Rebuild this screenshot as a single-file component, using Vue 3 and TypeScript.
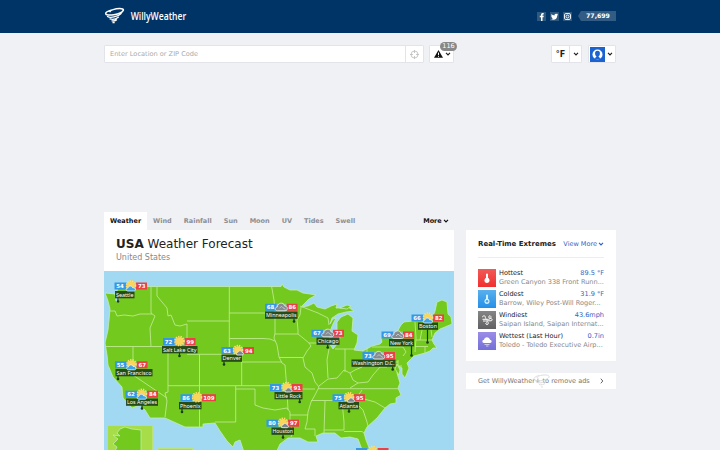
<template>
  <div class="page">
    <header class="header">
      <div class="container header-inner">
        <svg class="logo" width="100" height="24" viewBox="104 4 100 24">
          <g fill="none" stroke="#fff" stroke-linecap="round">
            <path stroke-width="1.5" d="M111 10.3c-3 .8-5.500 2.200-5.300 3.600.3 2.300 15.500 1.300 17.700-3.800.6-2.100-6.600-1.700-10.300-.5-2.200.7-3.300 1.400-3 2" />
            <path stroke-width="1.300" d="M107.500 16.500c2.500 1.700 10.500.5 13.600-3M110 18.900c2.600.8 6.300-.1 8.300-1.700M112 20.900c1.500.3 3.300-.2 4.500-1M113 22.700h1.200" />
          </g>
          <text x="130.700" y="19.600" textLength="55.500" lengthAdjust="spacingAndGlyphs">WillyWeather</text>
        </svg>
        <div class="social">
          <span class="social-link">
            <svg viewBox="0 0 9 9"><path d="M4 9V5.300H2.800V3.700H4V2.800C4 1.300 4.900.8 6.700 1v1.500c-1-.1-1.200.1-1.200.7v.5h1.300l-.3 1.600h-1V9z" /></svg>
          </span>
          <span class="social-link">
            <svg viewBox="0 0 9 9"><path d="M1.500 1.900c.9 1 1.900 1.400 3 1.500C4.300 2 5.900 1.100 6.900 2.100L8 1.800l-.7 1 .7-.1-.7.8c0 4-3.600 5-6.300 3.500.9 0 1.500-.2 2-.6-.7-.1-1.200-.5-1.400-1h.6c-.7-.4-1-.9-1-1.600l.6.2c-.6-.6-.7-1.300-.3-2.100z" /></svg>
          </span>
          <span class="social-link">
            <svg class="line" viewBox="0 0 9 9"><rect x="1.500" y="1.500" width="6" height="6" rx="1.400" /><circle cx="4.500" cy="4.500" r="1.500" /><path d="M6.200 2.600h.2" /></svg>
          </span>
          <span class="count">77,699</span>
        </div>
      </div>
    </header>

    <div class="container toolbar">
      <div class="search">
        <span class="search-text">Enter Location or ZIP Code</span>
        <span class="locate">
          <svg width="9" height="9" viewBox="0 0 9 9"><circle cx="4.500" cy="4.500" r="3.500" /><path d="M4.500 0v3M4.500 6v3M0 4.500h3M6 4.500h3" /></svg>
        </span>
      </div>
      <div class="box alerts">
        <svg width="9" height="8" viewBox="0 0 9 8"><path d="M4.500 0 9 7.700H0z" fill="#111" /><path d="M4.500 2.600v2.500M4.500 5.800v1" stroke="#fff" /></svg>
        <svg class="chevron" viewBox="0 0 6 4"><path d="m1 .8 2 2 2-2" /></svg>
        <span class="badge">116</span>
      </div>
      <div class="box unit">
        <b>°F</b>
        <span class="unit-arrow"><svg class="chevron" viewBox="0 0 6 4"><path d="m1 .8 2 2 2-2" /></svg></span>
      </div>
      <div class="box account">
        <svg width="15" height="15" viewBox="0 0 15 15">
          <rect width="15" height="15" fill="#1c63d2" />
          <circle cx="7.500" cy="7.500" r="5" fill="#fff" />
          <path d="M7.500 3.800c-1.800 0-2.600 1.300-2.400 3 .1 1.400.7 2.200 1.400 2.800-.2.900-1.200 1-2 1.600 1.800 1.700 4.200 1.700 6 0-.8-.6-1.800-.7-2-1.600.7-.6 1.300-1.400 1.400-2.800.2-1.700-.6-3-2.400-3z" fill="#1c63d2" />
        </svg>
        <svg class="chevron" viewBox="0 0 6 4"><path d="m1 .8 2 2 2-2" /></svg>
      </div>
    </div>

    <div class="container content">
      <main class="main">
        <nav class="tabs">
          <span v-for="(tab, i) in tabs" :key="tab" class="tab" :class="{ active: i === 0 }">{{ tab }}</span>
          <span class="more">More <svg class="chevron" viewBox="0 0 6 4"><path d="m1 .8 2 2 2-2" /></svg></span>
        </nav>
        <div class="title">
          <h1><b>USA</b> Weather Forecast</h1>
          <p>United States</p>
        </div>

        <svg class="map" width="350" height="179" viewBox="104 271 350 179">
          <rect x="104" y="271" width="350" height="179" fill="#a1d9f3" />
          <path class="land" :d="land" />
          <path class="land" :d="michigan" />
          <path class="borders" :d="borders" />
          <rect x="107.500" y="425.500" width="45" height="30" fill="#a6dd48" stroke="#b9e27a" />
          <path class="land" d="M141 451V430l-9-1-7-2-5 2-3 4 3 3-7-1 5 4-5 5 4 3-2 4z" />
          <rect x="158.500" y="448.500" width="34" height="6" fill="#a6dd48" stroke="#b9e27a" />

          <g v-for="c in cities" :key="c.name">
            <rect class="low" :x="c.x - 16.500" :y="c.y - 3.500" width="12" height="7" />
            <rect class="high" :x="c.x + 5" :y="c.y - 3.500" :width="c.high > 99 ? 14 : 11" height="7" />
            <rect :x="c.x - 5" :y="c.y - 3.500" width="10" height="7" fill="#91cfe7" opacity=".6" />
            <text class="temp" :x="c.x - 11" :y="c.y + 2">{{ c.low }}</text>
            <text class="temp" :x="c.x + (c.high > 99 ? 12 : 10.700)" :y="c.y + 2">{{ c.high }}</text>
            <template v-if="c.labelY < 450">
              <path class="pin" :d="`M${c.pinX} ${c.labelY + 7}V${c.pinY}`" />
              <circle :cx="c.pinX" :cy="c.pinY" r="1.300" fill="#173c16" />
              <rect class="label" :x="c.left" :y="c.labelY" :width="c.width" height="7.300" />
              <text class="city" :x="c.left + c.width / 2" :y="c.labelY + 5.600" :textLength="c.width - 2" lengthAdjust="spacingAndGlyphs">{{ c.name }}</text>
            </template>
            <g :transform="`translate(${c.x} ${c.y})`">
              <template v-if="c.icon !== 'cloud'">
                <circle r="4.300" fill="none" stroke="#ffe06a" stroke-width="2" stroke-dasharray="1.300 1" cy="-.5" />
                <circle r="3.700" cy="-.5" fill="#fcd55b" />
              </template>
              <path v-if="c.icon === 'partly'" d="M-3 5c-2.500 0-2.500-3 0-3 .4-2.500 4-2.500 4.600-.3C4.500 1 5.500 5 3 5z" fill="#3da5e8" stroke="#e9f5fb" stroke-width=".8" />
              <path v-if="c.icon === 'storm'" d="M0 4.500c-2 0-2-2.700 0-2.700.5-2 3.500-2 4 0 2 0 2 2.700 0 2.700z" fill="#7c858c" stroke="#eef3f5" stroke-width=".8" />
              <path v-if="c.icon === 'cloud'" d="M-4 3.500c-3 0-3-3.600-.3-3.700C-4-4.500 2-5.800 3-1.500 6.600-1.300 6.700 3.500 3.500 3.500z" fill="#858b90" stroke="#e3e8eb" stroke-width=".9" />
              <path v-if="c.icon === 'cloud'" d="m-2 1 2-2 1.500 1.500L4 2" fill="none" stroke="#d8dcdf" stroke-width=".7" />
            </g>
          </g>
        </svg>
      </main>

      <aside class="sidebar">
        <section class="extremes">
          <div class="extremes-head">
            <h2>Real-Time Extremes</h2>
            <span class="view">View More <svg class="chevron" viewBox="0 0 6 4"><path d="m1 .8 2 2 2-2" /></svg></span>
          </div>
          <div v-for="e in extremes" :key="e.name" class="extreme">
            <svg class="tile" :class="e.kind" viewBox="0 0 18 18">
              <path v-if="e.kind === 'hot'" d="M8 5.500a1 1 0 0 1 2 0v3.300c2.800 2 1.500 5.200-1 5.200s-3.800-3.200-1-5.200z" fill="#fff" />
              <g v-if="e.kind === 'cold'">
                <path d="M8 5.500a1 1 0 0 1 2 0v3.300c2.800 2 1.500 5.200-1 5.200s-3.800-3.200-1-5.200z" fill="#d9f2ff" />
                <circle cx="9" cy="11.200" r="1.300" fill="#41a5ed" />
              </g>
              <path v-if="e.kind === 'wind'" d="M4.500 8.300h6c1.200-.1 3-1.300 2.400-2.800-.6-1.300-2.300-.7-2.200.6.100 1.300 2 1.200 2.900 1.700 1 .7.500 2-.5 2H8.500M4.500 6.200c0-1.700 2.600-1.900 2.800-.4.100.7 0 1.700 1.200 2.500M5 10h2.500c1.500 0 2.900.8 2.800 2.500-.1 1.300-2.300 1.400-2.500.2-.1-1 .8-1.200 1.500-.7" fill="none" stroke="#fff" stroke-width="1" />
              <g v-if="e.kind === 'wet'">
                <path d="M6 11c-2.200 0-2-3.200 0-3.200.4-3.500 5.500-3.500 6 0 2 0 2.300 3.200 0 3.200z" fill="#fff" />
                <path d="M6.500 12.500h5M8 14h2.500" stroke="#fff" opacity=".6" />
              </g>
            </svg>
            <div class="extreme-text">
              <div class="extreme-top"><span>{{ e.name }}</span><span class="value">{{ e.value }}</span></div>
              <div class="place">{{ e.place }}</div>
            </div>
          </div>
        </section>
        <div class="remove-ads">
          <svg class="ghost" width="18" height="15" viewBox="0 0 18 15"><path d="M6 1.500C-3 4 1 8 9 6.500S19 .5 11 1 3 4.500 6 5M3 8c4 2 9 0 12-2M6 10.500c2 .8 5 0 6-1M8 13h2" /></svg>
          <span>Get WillyWeather+ to remove ads</span>
          <svg width="4" height="6" viewBox="0 0 4 6"><path d="m.8.700 2 2.300-2 2.300" fill="none" stroke="#666" stroke-width="1" /></svg>
        </div>
      </aside>
    </div>
  </div>
</template>

<script setup lang="ts">
interface City {
  name: string
  low: number
  high: number
  icon: 'sun' | 'partly' | 'storm' | 'cloud'
  x: number
  y: number
  left: number
  width: number
  labelY: number
  pinX: number
  pinY: number
}

const tabs = ['Weather', 'Wind', 'Rainfall', 'Sun', 'Moon', 'UV', 'Tides', 'Swell']

const extremes = [
  { kind: 'hot', name: 'Hottest', value: '89.5 °F', place: 'Green Canyon 338 Front Runn...' },
  { kind: 'cold', name: 'Coldest', value: '31.9 °F', place: 'Barrow, Wiley Post-Will Roger...' },
  { kind: 'wind', name: 'Windiest', value: '43.6mph', place: 'Saipan Island, Saipan Internat...' },
  { kind: 'wet', name: 'Wettest (Last Hour)', value: '0.7in', place: 'Toledo - Toledo Executive Airp...' },
]

const cities: City[] = [
  { name: 'Seattle', low: 54, high: 73, icon: 'partly', x: 131, y: 286, left: 115, width: 19.5, labelY: 291, pinX: 118, pinY: 301.5 },
  { name: 'Salt Lake City', low: 72, high: 99, icon: 'sun', x: 179.5, y: 341.5, left: 162, width: 35.5, labelY: 346, pinX: 179.5, pinY: 356 },
  { name: 'San Francisco', low: 55, high: 67, icon: 'partly', x: 131.5, y: 364.8, left: 115.5, width: 37, labelY: 369, pinX: 118, pinY: 379 },
  { name: 'Los Angeles', low: 62, high: 84, icon: 'partly', x: 142, y: 394.2, left: 126, width: 32, labelY: 398.5, pinX: 142, pinY: 408.5 },
  { name: 'Phoenix', low: 86, high: 109, icon: 'sun', x: 197, y: 397.7, left: 179, width: 22.5, labelY: 402, pinX: 182, pinY: 412 },
  { name: 'Denver', low: 63, high: 94, icon: 'storm', x: 238, y: 350.5, left: 221.5, width: 20.5, labelY: 354.5, pinX: 224, pinY: 364.5 },
  { name: 'Minneapolis', low: 68, high: 86, icon: 'cloud', x: 281.5, y: 307.3, left: 265, width: 32.5, labelY: 311.5, pinX: 294, pinY: 321.5 },
  { name: 'Chicago', low: 67, high: 73, icon: 'cloud', x: 328, y: 333.3, left: 316.5, width: 23, labelY: 337.5, pinX: 327.7, pinY: 347.5 },
  { name: 'Boston', low: 66, high: 82, icon: 'partly', x: 428, y: 318, left: 418, width: 20, labelY: 322.5, pinX: 427.5, pinY: 342.5 },
  { name: 'New York', low: 69, high: 84, icon: 'cloud', x: 398, y: 335, left: 389, width: 25, labelY: 339, pinX: 411.5, pinY: 355.5 },
  { name: 'Washington D.C.', low: 73, high: 95, icon: 'cloud', x: 379, y: 355.5, left: 351.5, width: 44, labelY: 359.5, pinX: 392.7, pinY: 369.5 },
  { name: 'Atlanta', low: 75, high: 95, icon: 'storm', x: 349, y: 397.7, left: 338.5, width: 20.5, labelY: 402, pinX: 349, pinY: 411.5 },
  { name: 'Little Rock', low: 73, high: 91, icon: 'storm', x: 286.5, y: 387.5, left: 274.5, width: 28, labelY: 392, pinX: 299.7, pinY: 402 },
  { name: 'Houston', low: 80, high: 97, icon: 'storm', x: 283, y: 423.2, left: 271.5, width: 22.5, labelY: 427.5, pinX: 283, pinY: 437.5 },
  { name: 'Tampa', low: 80, high: 91, icon: 'storm', x: 372.5, y: 451.5, left: 362, width: 21, labelY: 456, pinX: 372, pinY: 466 },
]

// Contiguous states, clockwise from Puget Sound
const land = `M105 293L115 294 116 301 118 303 119 296 117 290 120 286.500H281L282 284 284 287 290 290 297 290 303 293
  310 294 316 295 309 299 301 307 308 306 314 303 317 307 325 309 331 306 337 304 336 308 342 308 348 307 354 311
  346 312 338 314 332 318 330 324 333 319 336 318 333 324 330 331 329 343 333 349 337 344 340 338 337 330 337 322
  341 317 348 314 353 318 352 331 358 335 357 343 354 350 363 351 372 346 380 344 382 342 381 338 390 336 397 332
  401 325 404 322 413 321 431 321 435 311 437 302 442 300 447 302 448 314 451 317 452 324 445 327 440 329 435 333
  432 340 434 344 437 348 433 348 430 351 425 353 414 356 407 363 409 368 405 378 402 374 402 368 399 366 397 373
  400 383 398 388 401 395 396 398 396 403 390 404 385 408 377 418 367 427 364 433 366 440 370 450 374 460H366L361
  447 358 439 350 437 341 438 335 433 323 433 316 436 318 442 308 442 300 438 288 438 280 444 275 455H245L240 440
  235 442 233 447 227 441 220 431 215 423 203 424 203 427H185L165 418H150L145 410 140 405 132 408 123 398 122 387
  113 377 108 365 107 355 105 343 108 330 109 320 110 309 108 301z`

const michigan = 'M397 364l3 6-1 5-4-6zM340 308l7-3 4 1-4 3z'

// State lines, roughly west to east
const borders = `M110 311H115L117 316 124 315 133 316 140 314H152M151 287V313L155 316 150 328 151 346.500M106
  346.500H168M133 347V375L167 398M157 287V296L167 308 168 316 171 315 175 325 180 326 187 324V346.500H168V392L165
  393 167 401 165 417M187 321H229.300M187 354.300H229.300M229.300 287V354.300H241.700V385.700M229.300 313H275M229.300
  338.500H263L270 339 275 341M168 385.700H286.700M199.500 354.300V427M235.700 386V422H215M235.700 389H255V405L263
  408 275 410 287 408 290 412V423L293 432 291 437M241.700 362H282M271.700 287L274 300 275 311V333L274 338 277 345
  279 357 282 363 285 365 286.700 386 288 410M275 334H298L303 338 309 343 311 346 307 351 303 358 305 367 312 373
  315 382 319 387 315 395 311 402 308 412 307 422 305 429H315V436M301 307L300 315 297 320 298 330V334M279
  357.500H303M309 343H329M300 306L318 313 328 318 329 325M329 349L327 360 328 378M335 349H355M345 349V372M287
  389H315M318 388.700H398M311 400.500H354L364 399 375 402 385 408M290 415H308M319 386L328 379 337 378 344 370 350
  373 355 370 362 367 365 360 367 352M325 401L324 433M342 401L344 422V430H324M344 431.500H362L364 433M355 402L363
  410 367 422 368 426M350 373L353 380 358 383 368 382 373 375 380 367 387 367M358 383L350 388M355 400L362 390M367
  347V362H398M372 347H403L406 352 403 356M398 360V366H402M415 322L416 338 415 352M422 321V330L420 340M430 322L432
  337M416 340H432M415 346.500H428M425 347V353`
</script>

<style>
body {
  background: #eff1f5;
  overflow: hidden;
}
</style>

<style scoped>
.page {
  height: 450px;
  overflow: hidden;
  background: #eff1f5;
  font-family: "DejaVu Sans", sans-serif;
  font-size: 6.55px;
  color: #222;
}

.container {
  width: 512px;
  margin: 0 auto;
}

.header {
  height: 33px;
  background: #003467;
}

.header-inner {
  display: flex;
  align-items: center;
  justify-content: space-between;
  height: 32px;
}

.logo {
  overflow: visible;
}

.logo text {
  font-family: "Open Sans", sans-serif;
  font-size: 10.2px;
  font-weight: 600;
  fill: #fff;
}

.social {
  display: flex;
  align-items: center;
  gap: 4px;
}

.social-link {
  width: 9px;
  height: 9px;
  background: #2f587f;
}

.social-link svg {
  display: block;
  fill: #fff;
}

.social-link svg.line {
  fill: none;
  stroke: #fff;
  stroke-width: .9;
}

.count {
  width: 38px;
  height: 10px;
  padding-left: 2px;
  margin-left: 2px;
  box-sizing: border-box;
  background: #335c84;
  clip-path: polygon(0 50%, 3px 0, 100% 0, 100% 100%, 3px 100%);
  color: #fff;
  font-weight: bold;
  font-size: 6.2px;
  line-height: 10px;
  text-align: center;
}

.toolbar {
  display: flex;
  height: 18px;
  padding-top: 12px;
}

.search,
.box {
  display: flex;
  align-items: center;
  box-sizing: border-box;
  height: 18px;
  background: #fff;
  border: 1px solid #e3e4e9;
  border-radius: 1px;
}

.search {
  width: 320px;
  padding-left: 5px;
  justify-content: space-between;
  color: #aaa;
  font-size: 6.6px;
}

.locate {
  display: flex;
  align-items: center;
  justify-content: center;
  width: 17px;
  height: 16px;
  border-left: 1px solid #e4e4e8;
}

.locate svg {
  fill: none;
  stroke: #bbb;
  stroke-width: .8;
}

.chevron {
  width: 6px;
  height: 4px;
  fill: none;
  stroke: currentColor;
  stroke-width: 1.2;
}

.alerts {
  position: relative;
  width: 25px;
  margin-left: 5px;
  padding-left: 4px;
  gap: 2px;
}

.badge {
  position: absolute;
  top: -4px;
  right: -4px;
  width: 17px;
  height: 9px;
  border-radius: 5px;
  background: #888;
  color: #fff;
  font-size: 6.5px;
  line-height: 9px;
  text-align: center;
}

.unit {
  width: 31px;
  margin-left: auto;
  font-size: 8px;
}

.unit b {
  flex: 1;
  text-align: center;
}

.unit-arrow {
  display: flex;
  align-items: center;
  justify-content: center;
  width: 11px;
  height: 16px;
  border-left: 1px solid #e1e2e7;
}

.account {
  width: 28px;
  margin-left: 6px;
  padding-left: 1px;
  gap: 2px;
}

.content {
  display: flex;
  gap: 12px;
  padding-top: 149px;
}

.main {
  width: 350px;
}

.tabs {
  display: flex;
  height: 18px;
  line-height: 18px;
  font-weight: bold;
  font-size: 6.5px;
}

.tab {
  padding: 0 6px;
  color: #8e8e92;
}

.tab.active {
  background: #fff;
  color: #111;
}

.more {
  margin-left: auto;
  margin-right: 5px;
  color: #111;
}

.more .chevron,
.view .chevron {
  margin-left: -1px;
  vertical-align: 0;
}

.title {
  height: 41px;
  box-sizing: border-box;
  background: #fff;
  padding: 6px 12px 0;
}

h1 {
  margin: 0;
  font-size: 12px;
  line-height: 16px;
  font-weight: normal;
}

.title p {
  margin: 0;
  color: #888;
  font-size: 8px;
  line-height: 12px;
}

.map {
  display: block;
}

.land {
  fill: #73c91d;
  stroke: #c4eeb0;
  stroke-width: .8;
  stroke-linejoin: round;
}

.borders {
  fill: none;
  stroke: #bce98d;
  stroke-width: .9;
  stroke-linejoin: round;
}

.low {
  fill: #3598e6;
}

.high {
  fill: #ea4046;
}

.temp {
  fill: #fff;
  font-size: 5.4px;
  font-weight: bold;
  text-anchor: middle;
}

.pin {
  stroke: #173c16;
  stroke-width: 1.2;
}

.label {
  fill: #1d3d16;
  opacity: .9;
}

.city {
  fill: #fff;
  font-family: "Noto Sans", sans-serif;
  font-size: 5.7px;
  text-anchor: middle;
}

.sidebar {
  width: 150px;
  padding-top: 18px;
}

.extremes {
  height: 131px;
  box-sizing: border-box;
  padding: 0 12px;
  background: #fff;
}

.extremes-head {
  display: flex;
  align-items: center;
  justify-content: space-between;
  height: 27px;
  margin-bottom: 10px;
  border-bottom: 1px solid #e9eef4;
}

h2 {
  margin: 0;
  font-size: 7px;
  white-space: nowrap;
}

.view {
  color: #3263c4;
  font-size: 6.5px;
  white-space: nowrap;
}

.extreme {
  display: flex;
  gap: 3px;
  height: 21px;
}

.tile {
  width: 18px;
  height: 18px;
  margin-top: 1px;
  flex: none;
}

.hot {
  background: linear-gradient(#f15a58, #f0302f);
}

.cold {
  background: linear-gradient(#5ab0ec, #258fe9);
}

.wind {
  background: linear-gradient(#858585, #616161);
}

.wet {
  background: linear-gradient(#9a8de7, #7470d8);
}

.extreme-text {
  flex: 1;
  min-width: 0;
  padding-top: 1px;
  line-height: 9px;
}

.extreme-top {
  display: flex;
  justify-content: space-between;
}

.value {
  color: #3263c4;
}

.place {
  color: #888;
  white-space: nowrap;
}

.remove-ads {
  position: relative;
  display: flex;
  align-items: center;
  justify-content: space-between;
  height: 16px;
  margin-top: 12px;
  padding: 0 12px;
  background: #fff;
  color: #777;
}

.ghost {
  position: absolute;
  left: 67px;
  top: 1px;
  fill: none;
  stroke: #ddd;
}
</style>
